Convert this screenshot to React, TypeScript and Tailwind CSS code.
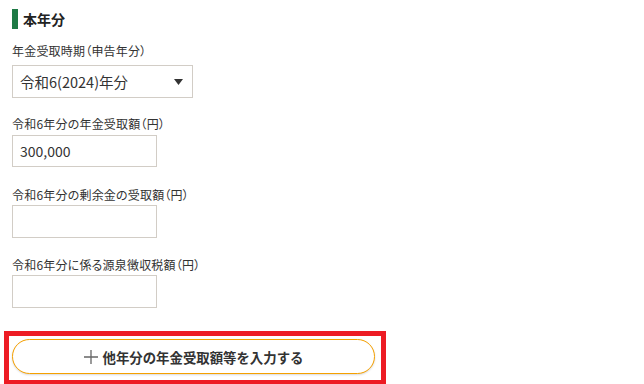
import React from "react";

const font = { fontFamily: '"Noto Sans CJK JP", "Noto Sans", sans-serif' };

function Label({ children, className }: { children: string; className: string }) {
  return (
    <div className={className + " text-[12px] leading-[18px] [font-feature-settings:'palt'] tracking-[0.2px]"}>
      {children}
    </div>
  );
}

export default function App() {
  return (
    <div className="w-[644px] h-[384px] bg-white overflow-hidden text-[#333]" style={font}>
      <div className="flex flex-col items-start pl-[12px] pt-[9px]">
        <div className="flex items-center h-[20px]">
          <div className="w-[6px] h-[20px] bg-[#1e7a45]" />
          <span className="ml-[5px] text-[14px] font-bold leading-[20px] text-[#222]">本年分</span>
        </div>

        <Label className="mt-[13px]">年金受取時期（申告年分）</Label>
        <div className="mt-[5px] w-[181px] h-[33px] border border-[#d2cdc6] flex items-center justify-between pl-[7px] pr-[9px]">
          <span className="text-[14.5px] leading-[20px]">令和6(2024)年分</span>
          <svg width="9" height="6" viewBox="0 0 9 6"><path d="M0 0 L9 0 L4.5 6 Z" fill="#333" /></svg>
        </div>

        <Label className="mt-[17px]">令和6年分の年金受取額（円）</Label>
        <div className="mt-[2px] w-[145px] h-[32px] border border-[#d2cdc6] flex items-center pl-[7px]">
          <span className="text-[14px] leading-[20px]">300,000</span>
        </div>

        <Label className="mt-[19px]">令和6年分の剰余金の受取額（円）</Label>
        <div className="mt-[1px] w-[145px] h-[33px] border border-[#d2cdc6]" />

        <Label className="mt-[18px]">令和6年分に係る源泉徴収税額（円）</Label>
        <div className="mt-[1px] w-[145px] h-[33px] border border-[#d2cdc6]" />

        <div className="mt-[23px] -ml-[8px] w-[382px] h-[54px] border-[5px] border-[#ed1c24] pl-[3px] pt-[3px]">
          <div className="w-[363px] h-[35px] rounded-full border border-[#f5a000] bg-white shadow-[0_1px_2px_rgba(0,0,0,0.15)] flex items-center justify-center gap-[5px]">
            <svg width="14" height="14" viewBox="0 0 14 14">
              <path d="M7 0 V14 M0 7 H14" stroke="#666" strokeWidth="1.3" />
            </svg>
            <span className="text-[13.4px] font-bold leading-[20px] text-[#333]">他年分の年金受取額等を入力する</span>
          </div>
        </div>
      </div>
    </div>
  );
}
